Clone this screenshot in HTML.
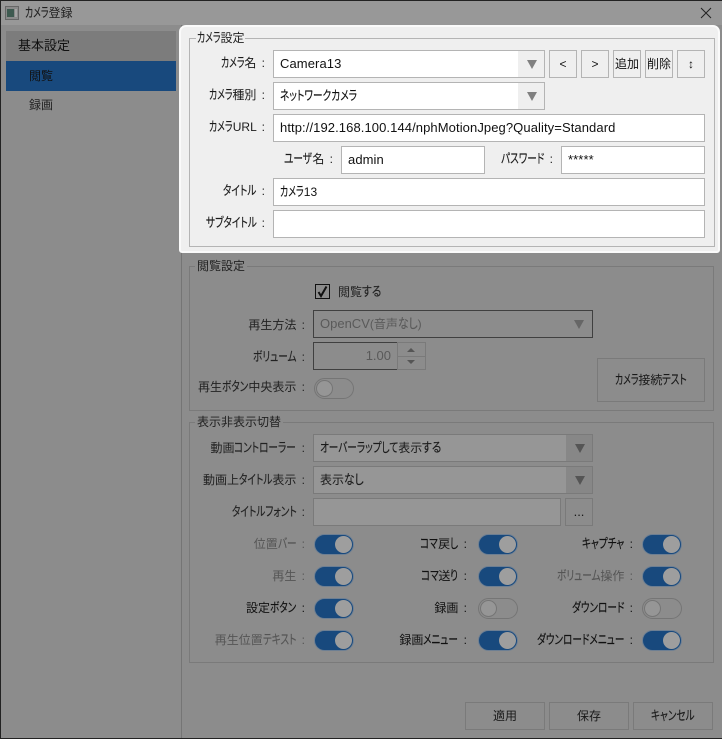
<!DOCTYPE html>
<html><head><meta charset="utf-8"><style>
*{box-sizing:border-box}
html,body{margin:0;padding:0;width:722px;height:739px;overflow:hidden;background:#222}
body{font:12px/16px "Liberation Sans","Noto Sans CJK JP",sans-serif;font-feature-settings:"palt";color:#1e1e1e;position:relative}
div,span{position:absolute;white-space:nowrap}
k{display:inline-block;font-size:13px;transform:scaleX(.74);transform-origin:0 50%;-webkit-text-stroke:.15px currentColor}
k.c{transform:scaleX(.68)}
k.h{transform:scaleX(.83)}
b{font-weight:400;font-size:12px}
.bx{border:1px solid #7a7a7a}
.g{border:1px solid #7a7a7a}
.l{text-align:right;color:#1a1a1a;height:16px;word-spacing:2px}
.m{color:#555}
.ls{color:#111}
.f{background:#fff;border:1px solid #b4b4b4;font-size:13px;line-height:26px;padding-left:6px;color:#111;letter-spacing:.09px}
.b{background:#efefef;border:1px solid #b4b4b4;text-align:center;line-height:26px;color:#111}
.d{border:1px solid #7a7a7a;text-align:center;line-height:26px;color:#1a1a1a;background:#8c8c8c}
.t{width:40px;height:21px;border-radius:11px;background:#18497d;border:1px solid #6d7f93}
.t i{position:absolute;right:1px;top:1px;width:17px;height:17px;border-radius:50%;background:#9e9e9e;display:block}
.o{background:#8c8c8c;border:1px solid #757575}
.o i{left:1px;right:auto;top:1px;background:#969696;border:1px solid #757575}
</style></head><body>
<div style="left:1px;top:1px;width:721px;height:737px;background:#8c8c8c"></div>
<div style="left:1px;top:1px;width:721px;height:24px;background:#989898"></div>
<svg style="position:absolute;left:5px;top:6px" width="14" height="14"><rect x=".5" y=".5" width="13" height="13" fill="#8a8a8a" stroke="#666"/><rect x="2" y="3" width="7" height="8" fill="#3e5a50"/><rect x="10" y="3" width="2" height="8" fill="#a5a5a5"/></svg>
<div style="left:25px;top:5px;color:#222"><k class="c">カメラ</k>登録</div>
<svg style="position:absolute;left:700px;top:7px" width="12" height="12"><path d="M1 1L11 11M11 1L1 11" stroke="#222" stroke-width="1" fill="none"/></svg>

<div style="left:6px;top:31px;width:170px;height:30px;background:#7c7c7c"></div>
<div style="left:18px;top:38px;font-size:13px;color:#111">基本設定</div>
<div style="left:6px;top:61px;width:170px;height:30px;background:#18497d"></div>
<div style="left:29px;top:68px;color:#111">閲覧</div>
<div style="left:29px;top:97px;color:#222">録画</div>
<div style="left:181px;top:25px;width:1px;height:713px;background:#757575"></div>

<!-- lower: group 1 -->
<div class="g" style="left:189px;top:266px;width:525px;height:145px"></div>
<div style="left:195px;top:258px;background:#8c8c8c;padding:0 2px;color:#222">閲覧設定</div>
<div style="left:315px;top:284px;width:15px;height:15px;border:1px solid #111"></div>
<svg style="position:absolute;left:315px;top:284px" width="15" height="15"><path d="M3.5 8L6 12L11.5 2.5" stroke="#111" stroke-width="2" fill="none"/></svg>
<div style="left:338px;top:284px;color:#222">閲覧<k class="h">する</k></div>
<div class="l" style="left:189px;top:317px;width:116px;color:#222">再生方法 :</div>
<div style="left:313px;top:310px;width:280px;height:28px;border:1px solid #404040;font-size:13px;line-height:26px;padding-left:6px;color:#5a5a5a">OpenCV<b>(音声<k class="h">なし</k>)</b></div>
<svg style="position:absolute;left:574px;top:320px" width="10" height="9"><path d="M0 0H10L5 9Z" fill="#666"/></svg>
<div class="l" style="left:189px;top:349px;width:116px;color:#222"><k>ボリューム</k> :</div>
<div style="left:313px;top:342px;width:85px;height:28px;border:1px solid #404040;font-size:13px;line-height:26px;text-align:right;padding-right:6px;color:#5a5a5a">1.00</div>
<div class="bx" style="left:397px;top:342px;width:29px;height:28px"></div>
<div style="left:398px;top:356px;width:27px;height:1px;background:#7a7a7a"></div>
<svg style="position:absolute;left:405px;top:346px" width="12" height="20"><path d="M2 6L6 2L10 6Z M2 14H10L6 18Z" fill="#555"/></svg>
<div class="l" style="left:189px;top:379px;width:116px;color:#222">再生<k>ボタン</k>中央表示 :</div>
<div class="t o" style="left:314px;top:378px"><i></i></div>
<div class="d" style="left:597px;top:358px;width:108px;height:44px;line-height:42px"><k class="c">カメラ</k>接続<k>テスト</k></div>

<!-- group 2 -->
<div class="g" style="left:189px;top:422px;width:525px;height:241px"></div>
<div style="left:195px;top:414px;background:#8c8c8c;padding:0 2px;color:#222">表示非表示切替</div>
<div class="l" style="left:189px;top:440px;width:116px;color:#222">動画<k>コントローラー</k> :</div>
<div class="l" style="left:189px;top:472px;width:116px;color:#222">動画上<k>タイトル</k>表示 :</div>
<div class="l" style="left:189px;top:504px;width:116px;color:#222"><k>タイトルフォント</k> :</div>
<div style="left:313px;top:434px;width:280px;height:28px;border:1px solid #7a7a7a;background:#969696;line-height:26px;padding-left:6px;color:#1a1a1a"><k>オーバーラップして</k>表示<k class="h">する</k></div>
<div style="left:566px;top:435px;width:26px;height:26px;background:#878787"></div>
<svg style="position:absolute;left:575px;top:444px" width="10" height="9"><path d="M0 0H10L5 9Z" fill="#555"/></svg>
<div style="left:313px;top:466px;width:280px;height:28px;border:1px solid #7a7a7a;background:#969696;line-height:26px;padding-left:6px;color:#1a1a1a">表示<k class="h">なし</k></div>
<div style="left:566px;top:467px;width:26px;height:26px;background:#878787"></div>
<svg style="position:absolute;left:575px;top:476px" width="10" height="9"><path d="M0 0H10L5 9Z" fill="#555"/></svg>
<div style="left:313px;top:498px;width:248px;height:28px;border:1px solid #7a7a7a;background:#969696"></div>
<div class="d" style="left:565px;top:498px;width:28px;height:28px;font-size:13px">...</div>

<div class="l m" style="left:189px;top:536px;width:116px">位置<k>バー</k> :</div><div class="t" style="left:314px;top:534px"><i></i></div>
<div class="l m" style="left:189px;top:568px;width:116px">再生 :</div><div class="t" style="left:314px;top:566px"><i></i></div>
<div class="l ls" style="left:189px;top:600px;width:116px">設定<k>ボタン</k> :</div><div class="t" style="left:314px;top:598px"><i></i></div>
<div class="l m" style="left:189px;top:632px;width:116px">再生位置<k>テキスト</k> :</div><div class="t" style="left:314px;top:630px"><i></i></div>

<div class="l ls" style="left:360px;top:536px;width:107px"><k>コマ</k>戻<k>し</k> :</div><div class="t" style="left:478px;top:534px"><i></i></div>
<div class="l ls" style="left:360px;top:568px;width:107px"><k>コマ</k>送<k>り</k> :</div><div class="t" style="left:478px;top:566px"><i></i></div>
<div class="l ls" style="left:360px;top:600px;width:107px">録画 :</div><div class="t o" style="left:478px;top:598px"><i></i></div>
<div class="l ls" style="left:360px;top:632px;width:107px">録画<k>メニュー</k> :</div><div class="t" style="left:478px;top:630px"><i></i></div>

<div class="l ls" style="left:500px;top:536px;width:133px"><k>キャプチャ</k> :</div><div class="t" style="left:642px;top:534px"><i></i></div>
<div class="l m" style="left:500px;top:568px;width:133px"><k>ボリューム</k>操作 :</div><div class="t" style="left:642px;top:566px"><i></i></div>
<div class="l ls" style="left:500px;top:600px;width:133px"><k>ダウンロード</k> :</div><div class="t o" style="left:642px;top:598px"><i></i></div>
<div class="l ls" style="left:500px;top:632px;width:133px"><k>ダウンロードメニュー</k> :</div><div class="t" style="left:642px;top:630px"><i></i></div>

<div class="d" style="left:465px;top:702px;width:80px;height:28px">適用</div>
<div class="d" style="left:549px;top:702px;width:80px;height:28px">保存</div>
<div class="d" style="left:633px;top:702px;width:80px;height:28px"><k>キャンセル</k></div>

<!-- highlighted panel -->
<div style="left:179px;top:25px;width:541px;height:228px;background:#efefef;border-radius:7px 7px 3px 3px;border:2px solid #fafafa"></div>
<div style="left:189px;top:38px;width:526px;height:209px;border:1px solid #b4b4b4"></div>
<div style="left:196px;top:30px;background:#efefef;padding:0 1px;color:#222"><k class="c">カメラ</k>設定</div>

<div class="l" style="left:169px;top:55px;width:96px"><k class="c">カメラ</k>名 :</div>
<div class="f" style="left:273px;top:50px;width:272px;height:28px">Camera13</div>
<div style="left:518px;top:51px;width:26px;height:26px;background:#efefef"></div>
<svg style="position:absolute;left:527px;top:60px" width="10" height="9"><path d="M0 0H10L5 9Z" fill="#808080"/></svg>
<div class="b" style="left:549px;top:50px;width:28px;height:28px">&lt;</div>
<div class="b" style="left:581px;top:50px;width:28px;height:28px">&gt;</div>
<div class="b" style="left:613px;top:50px;width:28px;height:28px">追加</div>
<div class="b" style="left:645px;top:50px;width:28px;height:28px">削除</div>
<div class="b" style="left:677px;top:50px;width:28px;height:28px;font-weight:700">↕</div>

<div class="l" style="left:169px;top:87px;width:96px"><k class="c">カメラ</k>種別 :</div>
<div class="f" style="left:273px;top:82px;width:272px;height:28px;font-size:12px"><k>ネットワークカメラ</k></div>
<div style="left:518px;top:83px;width:26px;height:26px;background:#efefef"></div>
<svg style="position:absolute;left:527px;top:92px" width="10" height="9"><path d="M0 0H10L5 9Z" fill="#808080"/></svg>

<div class="l" style="left:169px;top:119px;width:96px"><k class="c">カメラ</k>URL :</div>
<div class="f" style="left:273px;top:114px;width:432px;height:28px">http://192.168.100.144/nphMotionJpeg?Quality=Standard</div>

<div class="l" style="left:259px;top:151px;width:74px"><k>ユーザ</k>名 :</div>
<div class="f" style="left:341px;top:146px;width:144px;height:28px">admin</div>
<div class="l" style="left:479px;top:151px;width:74px"><k>パスワード</k> :</div>
<div class="f" style="left:561px;top:146px;width:144px;height:28px">*****</div>

<div class="l" style="left:169px;top:183px;width:96px"><k>タイトル</k> :</div>
<div class="f" style="left:273px;top:178px;width:432px;height:28px;font-size:12px"><k class="c">カメラ</k>13</div>
<div class="l" style="left:169px;top:215px;width:96px"><k>サブタイトル</k> :</div>
<div class="f" style="left:273px;top:210px;width:432px;height:28px"></div>
<script>
document.querySelectorAll('k').forEach(function(e){
  var s=e.className=='c'?.68:e.className=='h'?.83:.74;
  e.style.marginRight=(-(e.offsetWidth*(1-s)))+'px';
});
</script>
</body></html>
